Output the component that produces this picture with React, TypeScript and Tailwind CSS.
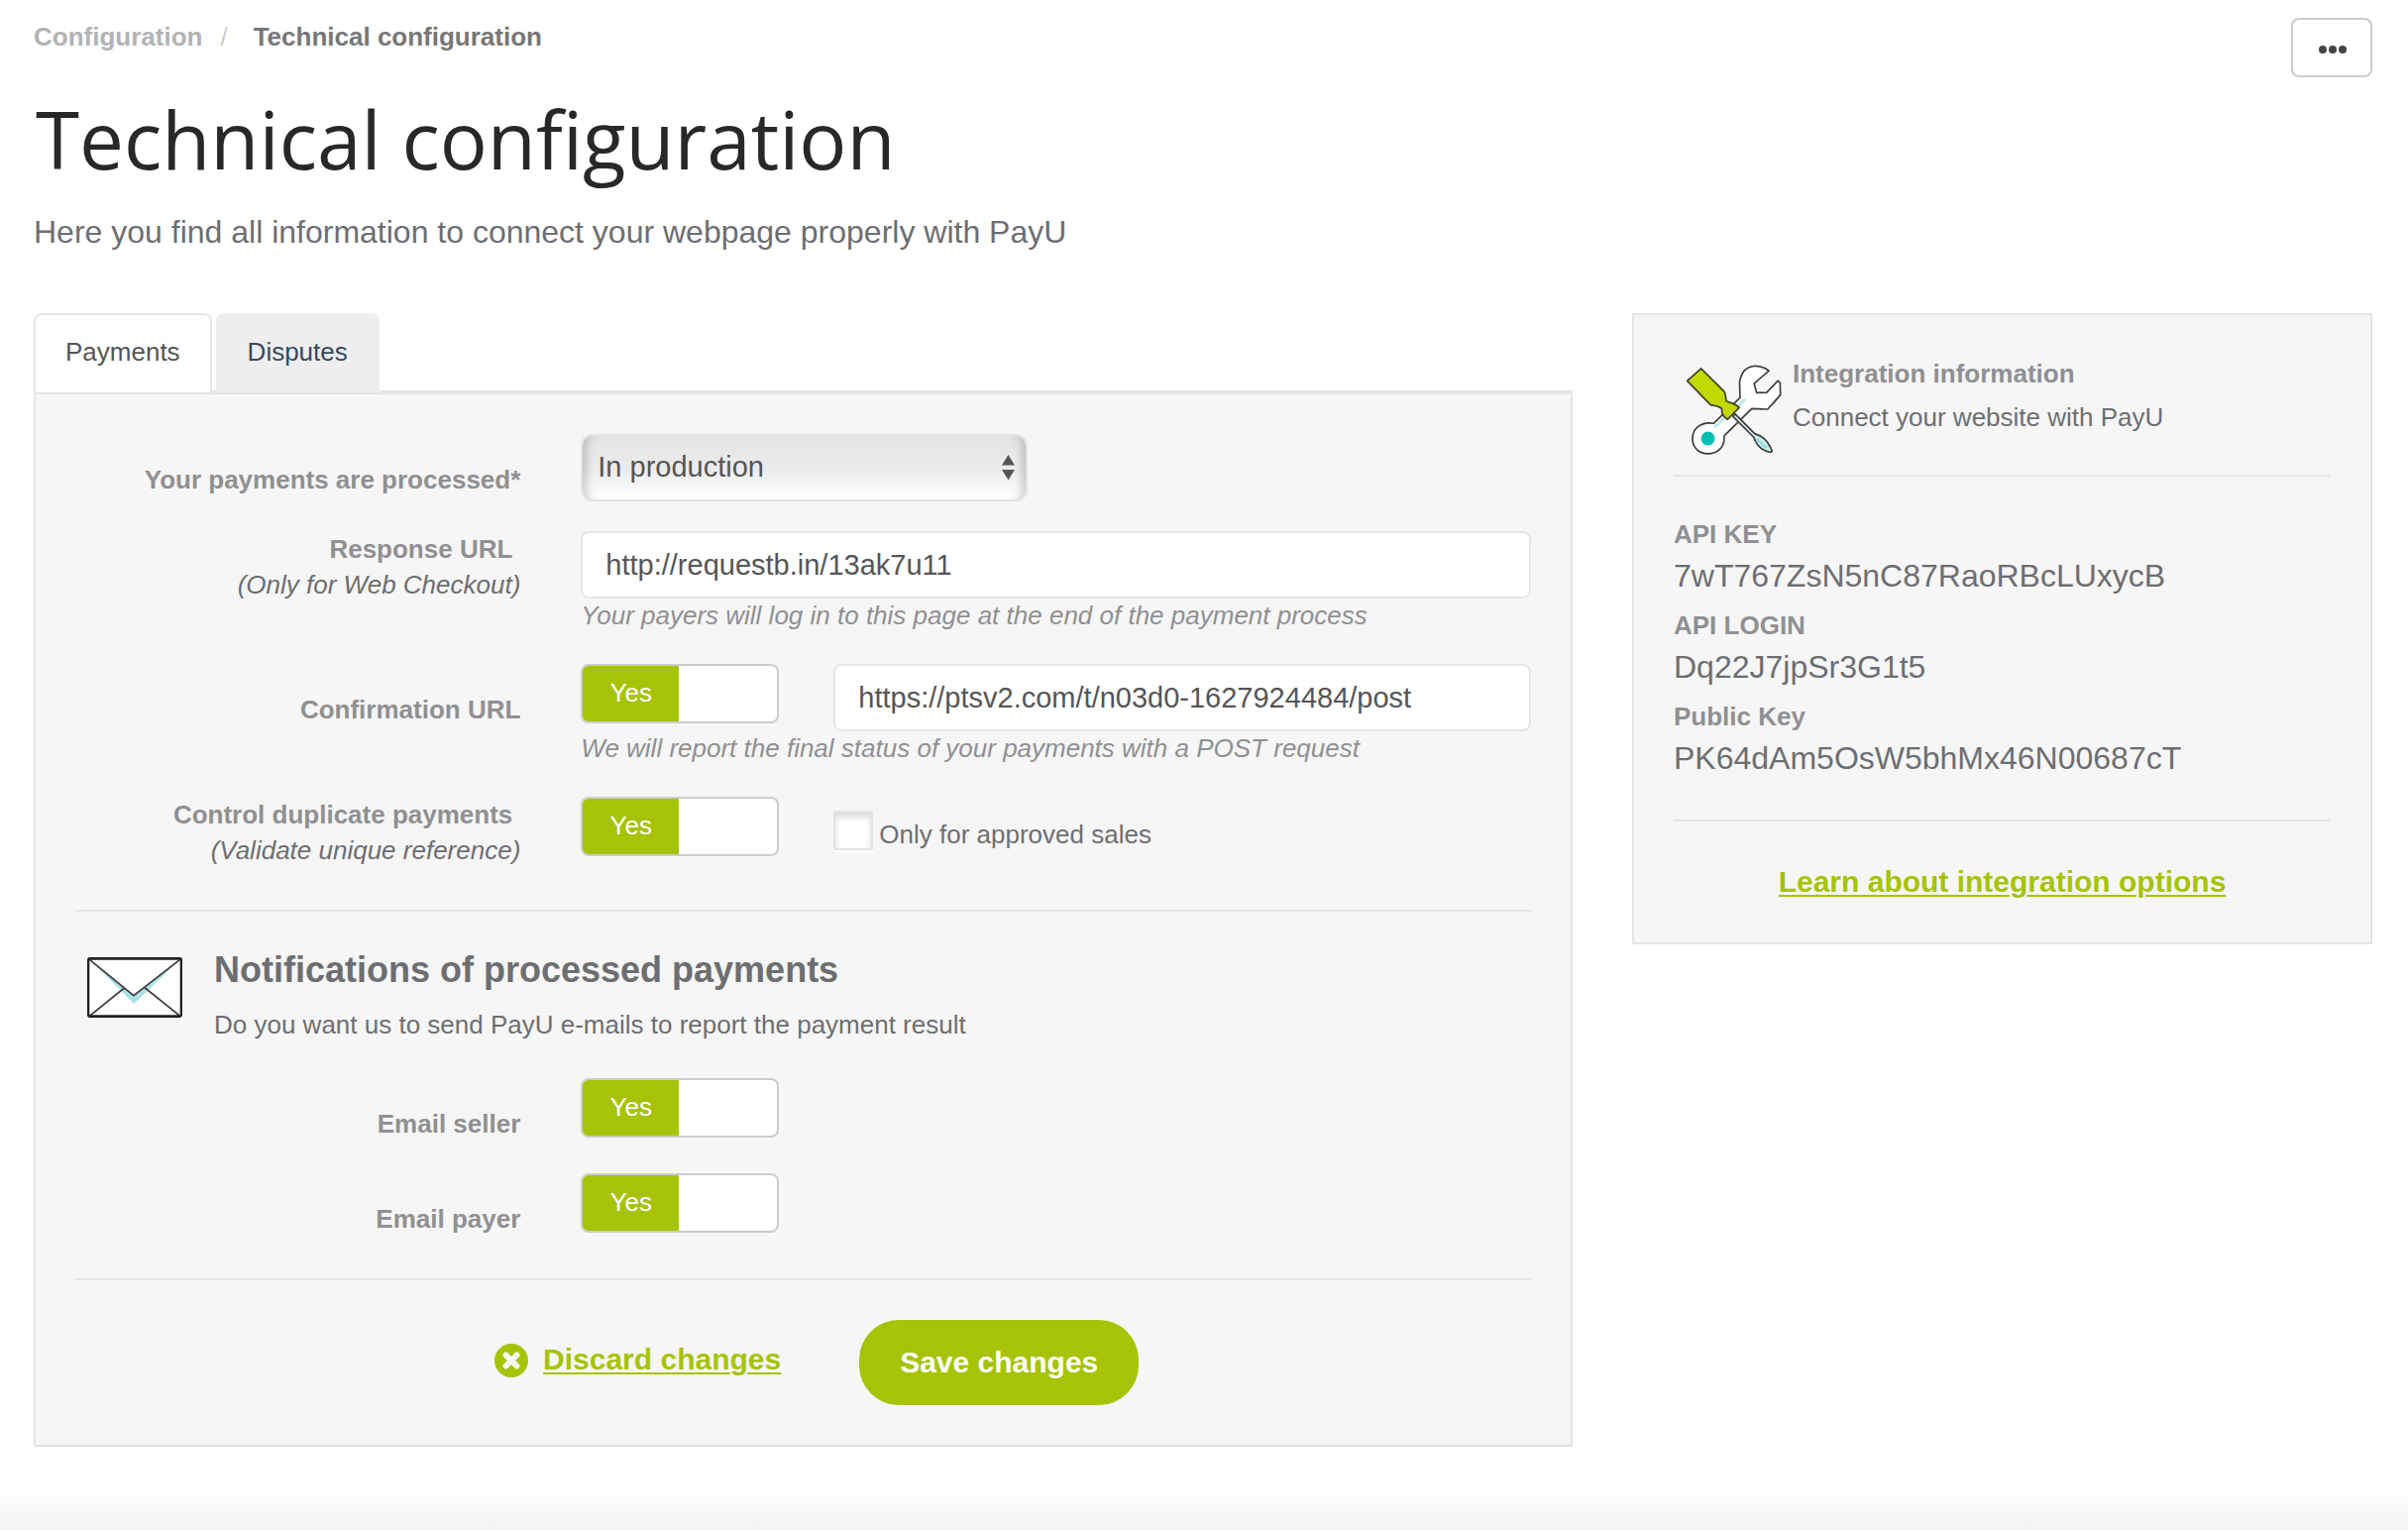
import { useState, type ReactNode } from "react";

function ToolsIcon() {
  return (
    <svg viewBox="30 25 295 280" className="mt-2 ml-3 h-[94px] w-[98px] shrink-0" aria-hidden="true">
      <path
        d="M237 31 C215 34 202 44 194 78 L195 118 L196 126 L115 205 C75 199 50 222 51 253 C53 282 72 297 98 297 C128 297 147 276 147 252 L147 243 L231 160 L279 162 C300 140 310 128 318 118 L317 82 L311 75 L276 111 L246 112 L238 84 L283 45 C270 35 256 30 237 31 Z"
        fill="#fff"
        stroke="#3f3b3b"
        strokeWidth="5"
        strokeLinejoin="round"
      />
      <path d="M118 216 L212 131" stroke="#b5e8ea" strokeWidth="8" fill="none" />
      <circle cx="98" cy="251" r="21" fill="#00bfb3" />
      <path
        d="M180 176 L240 236 C262 243 278 254 293 289 L288 293 C262 289 246 273 237 247 L174 184 Z"
        fill="#c9eef0"
        stroke="#3f3b3b"
        strokeWidth="5"
        strokeLinejoin="round"
      />
      <path d="M246 252 L276 280" stroke="#8fdcdf" strokeWidth="7" />
      <path
        d="M77 38 L35 76 L106 149 C120 151 131 152 140 160 C138 172 143 183 157 193 L193 157 C182 144 165 143 154 137 C151 126 152 116 148 109 Z"
        fill="#c1d900"
        stroke="#3f3f2a"
        strokeWidth="5"
        strokeLinejoin="round"
      />
    </svg>
  );
}

function EnvelopeIcon() {
  return (
    <svg viewBox="25 38 287 181" className="mt-2 ml-3 h-[61px] w-[96px] shrink-0" aria-hidden="true">
      <rect x="28" y="41" width="281" height="175" rx="7" fill="#fff" stroke="#231f20" strokeWidth="7" />
      <path d="M34 46 L166 178 L303 46 L165 153 Z" fill="#a9e3e6" />
      <path d="M33 45 L165 153 L304 45 M137 130 L34 213 M196 127 L303 213" fill="none" stroke="#3f3b3b" strokeWidth="5" />
      <rect x="28" y="41" width="281" height="175" rx="7" fill="none" stroke="#231f20" strokeWidth="7" />
    </svg>
  );
}

function Toggle({ id }: { id: string }) {
  const [on, setOn] = useState(true);
  return (
    <button
      id={id}
      type="button"
      role="switch"
      aria-checked={on}
      onClick={() => setOn(!on)}
      className={
        on
          ? "flex h-[60px] w-[200px] shrink-0 overflow-hidden rounded-lg border-2 border-[#ccc] bg-white"
          : "flex h-[60px] w-[200px] shrink-0 justify-end overflow-hidden rounded-lg border-2 border-[#ccc] bg-white"
      }
    >
      <span
        className={
          on
            ? "flex h-full w-[97px] items-center justify-center bg-[#a6c307] pb-0.5 text-white"
            : "flex h-full w-[97px] items-center justify-center bg-[#ddd] pb-0.5 text-[#555]"
        }
      >
        {on ? "Yes" : "No"}
      </span>
    </button>
  );
}

function Row({ id, label, note, children }: { id: string; label: string; note?: string; children: ReactNode }) {
  return (
    <div className="grid grid-cols-[449fr_958fr] gap-[61px]">
      <label htmlFor={id} className={note ? "text-right leading-9" : "pt-7 text-right leading-9"}>
        <span className={note ? "block pr-2 font-bold text-[#8f9092]" : "block font-bold text-[#8f9092]"}>{label}</span>
        {note && <em className="block text-[#6d6e71]">{note}</em>}
      </label>
      <div>{children}</div>
    </div>
  );
}

const inputClass =
  "h-[68px] w-full min-w-0 rounded-lg border-2 border-[#e6e6e6] bg-white px-[23px] text-[29px] text-[#555] outline-none";

const keys = [
  { name: "API KEY", value: "7wT767ZsN5nC87RaoRBcLUxycB" },
  { name: "API LOGIN", value: "Dq22J7jpSr3G1t5" },
  { name: "Public Key", value: "PK64dAm5OsW5bhMx46N00687cT" },
];

export default function App() {
  return (
    <div className="flex min-h-screen flex-col bg-white font-['Liberation_Sans',Arial,sans-serif] text-[26px] leading-9 text-[#6d6e71]">
      <div className="pr-9 pl-[34px]">
        <header className="flex items-start justify-between pt-[18px]">
          <div>
            <nav aria-label="Breadcrumb" className="flex leading-[38px] font-bold">
              <a href="#configuration" className="text-[#b3b3b3]">Configuration</a>
              <span className="mr-[26px] ml-[18px] font-normal text-[#ccc]">/</span>
              <span className="text-[#777]">Technical configuration</span>
            </nav>
            <h1 className="mt-9 pl-0.5 font-['Open_Sans',sans-serif] text-[80px] leading-[96px] text-[#282828]">
              Technical configuration
            </h1>
            <p className="mt-6 text-[32px] leading-[44px]">
              Here you find all information to connect your webpage properly with PayU
            </p>
          </div>
          <button
            type="button"
            aria-label="More options"
            className="flex h-[60px] w-[82px] items-center justify-center rounded-lg border-2 border-[#ccc] bg-white"
          >
            <svg viewBox="0 0 28 8" className="mt-1 ml-0.5 h-2 w-7" fill="#444" aria-hidden="true">
              <circle cx="4" cy="4" r="4" />
              <circle cx="14" cy="4" r="4" />
              <circle cx="24" cy="4" r="4" />
            </svg>
          </button>
        </header>

        <div className="mt-[60px] grid grid-cols-[1553fr_747fr] items-start gap-[60px]">
          <main>
            <div role="tablist" className="flex gap-1 border-b-2 border-[#e3e4e5]">
              <button
                type="button"
                role="tab"
                aria-selected="true"
                className="-mb-[2px] h-20 rounded-t-lg border-2 border-b-0 border-[#e6e6e6] bg-white px-[30px] pb-1 text-[#555]"
              >
                Payments
              </button>
              <button
                type="button"
                role="tab"
                aria-selected="false"
                className="-mb-[2px] h-20 rounded-t-lg bg-[#eee] px-8 pb-0.5 text-[#34495e]"
              >
                Disputes
              </button>
            </div>

            <form className="border-2 border-[#e3e4e5] bg-[#f6f6f6] px-10 py-10" onSubmit={(e) => e.preventDefault()}>
              <div className="flex flex-col gap-[30px] pb-[42px]">
                <Row id="mode" label="Your payments are processed*">
                  <div className="relative w-[47%]">
                    <select
                      id="mode"
                      className="h-[68px] w-full appearance-none rounded-xl border-2 border-[#e3e3e3] bg-linear-to-b from-[#e4e4e4] via-[#ebebeb] to-white px-[15px] pb-0.5 text-[29px] text-[#555] shadow-[inset_12px_0_8px_-8px_rgba(0,0,0,0.18),inset_-12px_0_8px_-8px_rgba(0,0,0,0.18)] outline-none"
                    >
                      <option>In production</option>
                      <option>In tests</option>
                    </select>
                    <svg
                      viewBox="0 0 13 26"
                      className="pointer-events-none absolute top-[21px] right-[13px] h-[26px] w-[13px]"
                      fill="#555"
                      aria-hidden="true"
                    >
                      <path d="M6.5 0 L13 10.500 H0 Z M0 15 H13 L6.500 25.500 Z" />
                    </svg>
                  </div>
                </Row>

                <Row id="response" label="Response URL" note="(Only for Web Checkout)">
                  <input id="response" type="text" defaultValue="http://requestb.in/13ak7u11" className={inputClass} />
                  <p className="pb-0.5 leading-[34px] text-[#8f9092] italic">
                    Your payers will log in to this page at the end of the payment process
                  </p>
                </Row>

                <Row id="confirmation" label="Confirmation URL">
                  <div className="flex gap-[55px]">
                    <Toggle id="confirmation" />
                    <input
                      type="text"
                      aria-label="Confirmation URL address"
                      defaultValue="https://ptsv2.com/t/n03d0-1627924484/post"
                      className={inputClass}
                    />
                  </div>
                  <p className="pb-0.5 leading-[34px] text-[#8f9092] italic">
                    We will report the final status of your payments with a POST request
                  </p>
                </Row>

                <Row id="duplicates" label="Control duplicate payments" note="(Validate unique reference)">
                  <div className="flex items-start gap-[55px]">
                    <Toggle id="duplicates" />
                    <label className="flex gap-1.5 pt-3.5">
                      <input
                        type="checkbox"
                        className="size-10 appearance-none border-2 border-[#e3e3e3] bg-white shadow-[inset_0_4px_6px_rgba(0,0,0,0.16),0_2px_0_#fff] checked:bg-[#a6c307]"
                      />
                      <span className="pt-1.5">Only for approved sales</span>
                    </label>
                  </div>
                </Row>
              </div>

              <section className="border-y-2 border-[#e6e6e6] pt-[38px] pb-[42px]">
                <div className="flex gap-8">
                  <EnvelopeIcon />
                  <div>
                    <h2 className="text-4xl leading-[42px] font-bold">Notifications of processed payments</h2>
                    <p className="mt-4">Do you want us to send PayU e-mails to report the payment result</p>
                  </div>
                </div>
                <div className="mt-9 flex flex-col gap-8">
                  <Row id="seller" label="Email seller">
                    <Toggle id="seller" />
                  </Row>
                  <Row id="payer" label="Email payer">
                    <Toggle id="payer" />
                  </Row>
                </div>
              </section>

              <div className="flex items-center gap-[79px] pt-10 pl-[28.8%] text-3xl font-bold">
                <a href="#discard" className="mb-1 flex items-center gap-[15px] text-[#a6c307]">
                  <svg viewBox="0 0 34 34" className="size-[34px]" aria-hidden="true">
                    <circle cx="17" cy="17" r="17" fill="#a6c307" />
                    <path d="M11.500 11.500 L22.500 22.500 M22.500 11.500 L11.500 22.500" stroke="#f6f6f6" strokeWidth="6" strokeLinecap="round" />
                  </svg>
                  <span className="pb-0.5 underline decoration-2 underline-offset-[3px]">Discard changes</span>
                </a>
                <button type="submit" className="h-[86px] rounded-[40px] bg-[#a6c307] px-[41px] text-white">
                  Save changes
                </button>
              </div>
            </form>
          </main>

          <aside className="border-2 border-[#e3e4e5] bg-[#f6f6f6] px-10">
            <div className="flex gap-2.5 pt-[41px] pb-[18px]">
              <ToolsIcon />
              <div>
                <h3 className="font-bold text-[#8f9092]">Integration information</h3>
                <p className="mt-2">Connect your website with PayU</p>
              </div>
            </div>
            <dl className="flex flex-col gap-2 border-y-2 border-[#e6e6e6] pt-[38px] pb-10">
              {keys.map((k) => (
                <div key={k.name}>
                  <dt className="leading-10 font-bold text-[#8f9092]">{k.name}</dt>
                  <dd className="text-[32px] leading-[44px]">{k.value}</dd>
                </div>
              ))}
            </dl>
            <p className="py-[39px] text-center text-3xl leading-[44px] font-bold">
              <a href="#integration" className="text-[#a6c307] underline decoration-2 underline-offset-[3px]">
                Learn about integration options
              </a>
            </p>
          </aside>
        </div>
      </div>
      <div className="mt-auto h-12 bg-linear-to-b from-white to-[#f4f4f4]" />
    </div>
  );
}
